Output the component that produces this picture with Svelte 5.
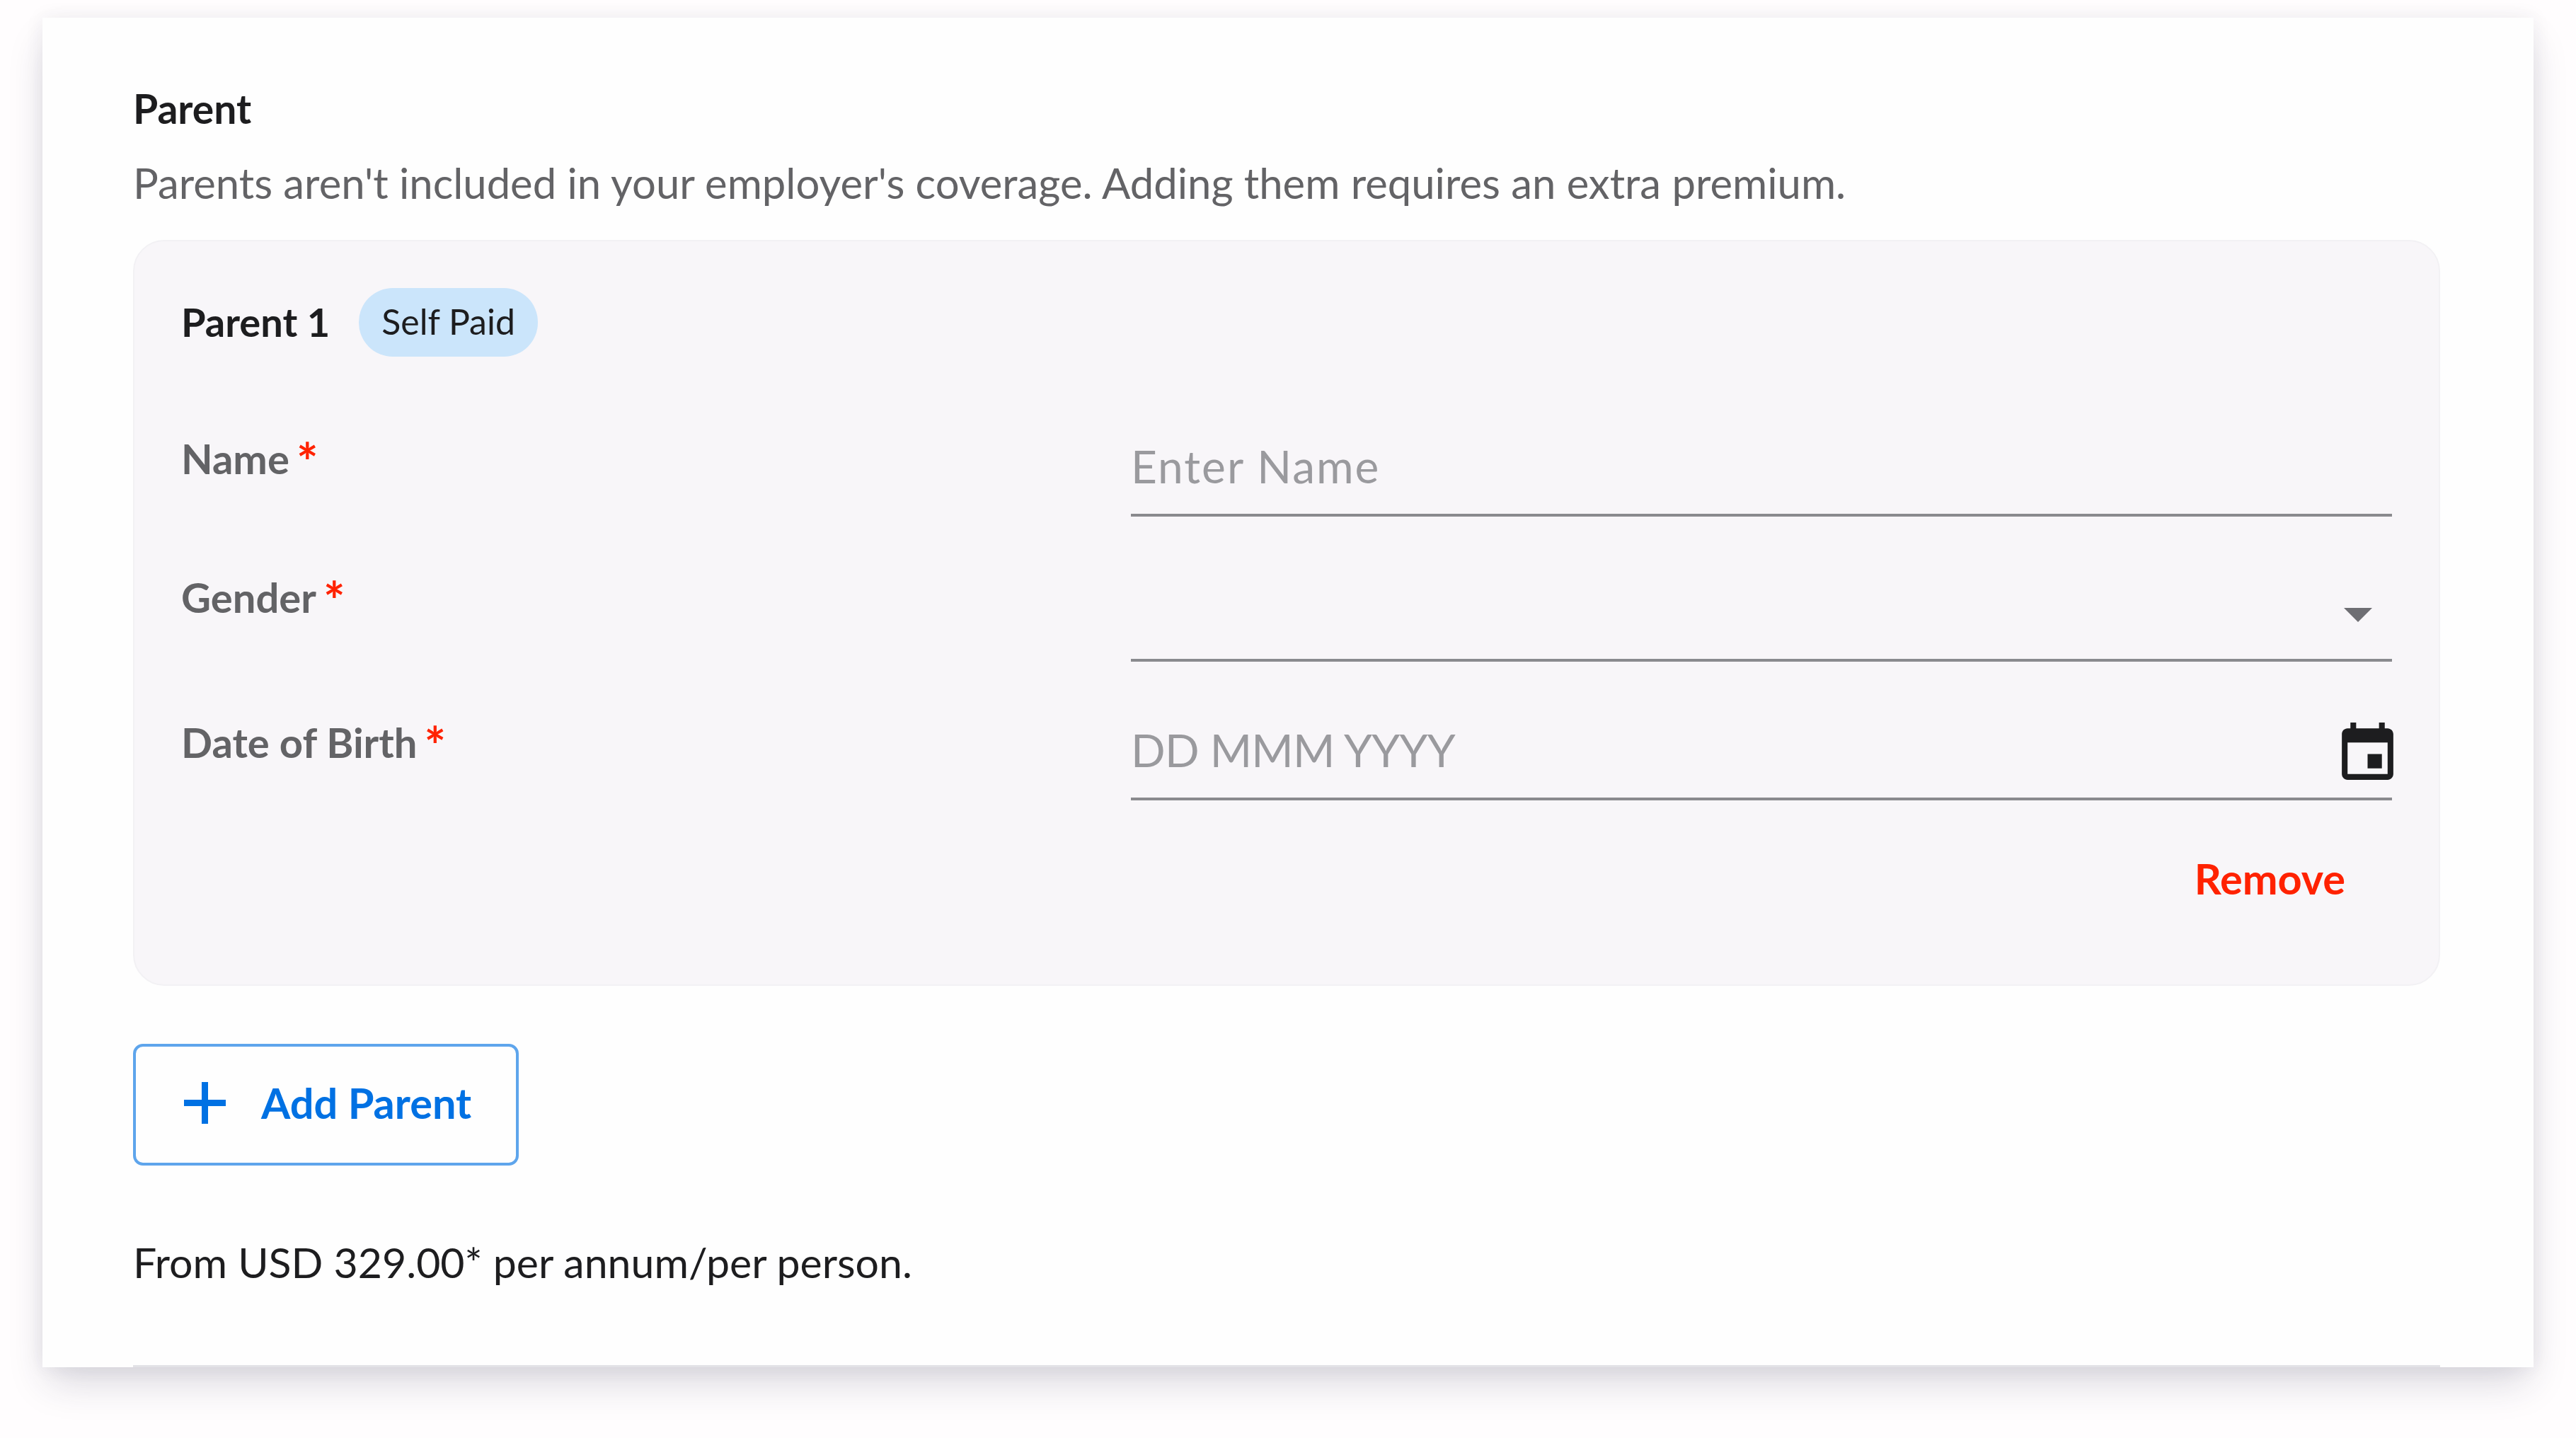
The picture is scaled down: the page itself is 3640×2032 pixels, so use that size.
<script>
	const fields = [
		{ label: 'Name', placeholder: 'Enter Name', kind: 'text' },
		{ label: 'Gender', placeholder: '', kind: 'select' },
		{ label: 'Date of Birth', placeholder: 'DD MMM YYYY', kind: 'date' }
	];
</script>

<div class="page">
	<section class="card">
		<h2>Parent</h2>
		<p class="lead">Parents aren't included in your employer's coverage. Adding them requires an extra premium.</p>

		<div class="panel">
			<div class="panel-head">
				<h3>Parent 1</h3>
				<span class="pill">Self Paid</span>
			</div>

			{#each fields as f}
				<div class="row {f.kind}">
					<div class="label">{f.label}<span class="star">*</span></div>
					<div class="field">
						<span class="placeholder">{f.placeholder}</span>
						{#if f.kind === 'select'}
							<span class="caret"></span>
						{/if}
						{#if f.kind === 'date'}
							<svg class="cal" viewBox="0 0 24 24" aria-hidden="true">
								<path d="M17 12h-5v5h5v-5zM16 1v2H8V1H6v2H5c-1.11 0-1.99.9-1.99 2L3 19c0 1.1.89 2 2 2h14c1.1 0 2-.9 2-2V5c0-1.1-.9-2-2-2h-1V1h-2zm3 18H5V8h14v11z" />
							</svg>
						{/if}
					</div>
				</div>
			{/each}

			<div class="actions"><span class="remove">Remove</span></div>
		</div>

		<button class="add" type="button">
			<svg class="plus" viewBox="0 0 59 59" aria-hidden="true">
				<path d="M29.5 0v59M0 29.5h59" />
			</svg>
			<span>Add Parent</span>
		</button>

		<p class="price">From USD 329.00* per annum/per person.</p>

		<div class="divider"></div>
	</section>
</div>

<style>
	:global(body) {
		background: #fffdfe;
	}

	.page {
		padding: 25px 60px 100px;
		font-family: Lato, 'Open Sans', sans-serif;
	}

	.card {
		box-sizing: border-box;
		height: 1907px;
		padding: 94px 132px 0 128px;
		background: #fefefe;
		box-shadow: 0 28px 52px -8px rgba(40, 40, 70, 0.18), 0 0 26px rgba(40, 40, 70, 0.07);
		display: flex;
		flex-direction: column;
	}

	h2 {
		margin: 0;
		font-size: 57px;
		line-height: 68px;
		font-weight: 700;
		color: #1d1d1f;
	}

	.lead {
		margin: 36px 0 0;
		font-size: 59.8px;
		line-height: 70px;
		color: #636366;
	}

	.panel {
		box-sizing: border-box;
		margin-top: 46px;
		height: 1054px;
		padding: 66px 66px 0 66px;
		background: #f8f6f9;
		border: 2px solid #f2f1f4;
		border-radius: 44px;
	}

	.panel-head {
		display: flex;
		align-items: center;
		gap: 41px;
		margin-bottom: 109px;
	}

	h3 {
		margin: -3px 0 0;
		font-size: 56px;
		font-weight: 700;
		color: #1d1d1f;
	}

	.pill {
		padding: 0 32px;
		height: 97px;
		line-height: 94px;
		border-radius: 48px;
		background: #cbe5fb;
		font-size: 50px;
		color: #1d1d1f;
	}

	.row {
		display: grid;
		grid-template-columns: 1342px 1fr;
		margin-top: 79px;
	}

	.row.text {
		margin-top: 0;
	}

	.label {
		font-size: 58px;
		line-height: 70px;
		font-weight: 700;
		color: #636366;
	}

	.star {
		margin-left: 10px;
		font-size: 72px;
		line-height: 0;
		vertical-align: -10px;
		color: #ff2200;
	}

	.field {
		position: relative;
		height: 117px;
		border-bottom: 4px solid #8a8a8e;
		box-sizing: border-box;
	}

	.select .field {
		height: 126px;
	}

	.placeholder {
		font-size: 64px;
		line-height: 91px;
		color: #9a9a9e;
	}

	.text .placeholder {
		letter-spacing: 2px;
	}

	.date .placeholder {
		letter-spacing: -0.7px;
	}

	.caret {
		position: absolute;
		right: 28px;
		top: 50px;
		border-left: 20px solid transparent;
		border-right: 20px solid transparent;
		border-top: 20px solid #6e6e73;
	}

	.cal {
		position: absolute;
		right: -14px;
		top: 3px;
		width: 97px;
		height: 97px;
		fill: #1d1d1f;
	}

	.actions {
		display: flex;
		justify-content: flex-end;
		margin: 74px 66px 0 0;
	}

	.remove {
		font-size: 59.5px;
		font-weight: 700;
		color: #ff2200;
	}

	.add {
		box-sizing: border-box;
		align-self: flex-start;
		display: flex;
		align-items: center;
		gap: 50px;
		margin-top: 82px;
		width: 545px;
		height: 172px;
		padding: 0 0 6px 68px;
		background: transparent;
		border: 4px solid #5ea5ec;
		border-radius: 14px;
		font-family: inherit;
		font-size: 59.5px;
		font-weight: 700;
		color: #0071e3;
	}

	.plus {
		width: 59px;
		height: 59px;
		flex: none;
		stroke: #0071e3;
		stroke-width: 9;
		fill: none;
	}

	.price {
		margin: 102px 0 0;
		font-size: 59px;
		line-height: 70px;
		color: #1d1d1f;
	}

	.divider {
		margin-top: auto;
		height: 3px;
		background: #e2e2e6;
	}
</style>
